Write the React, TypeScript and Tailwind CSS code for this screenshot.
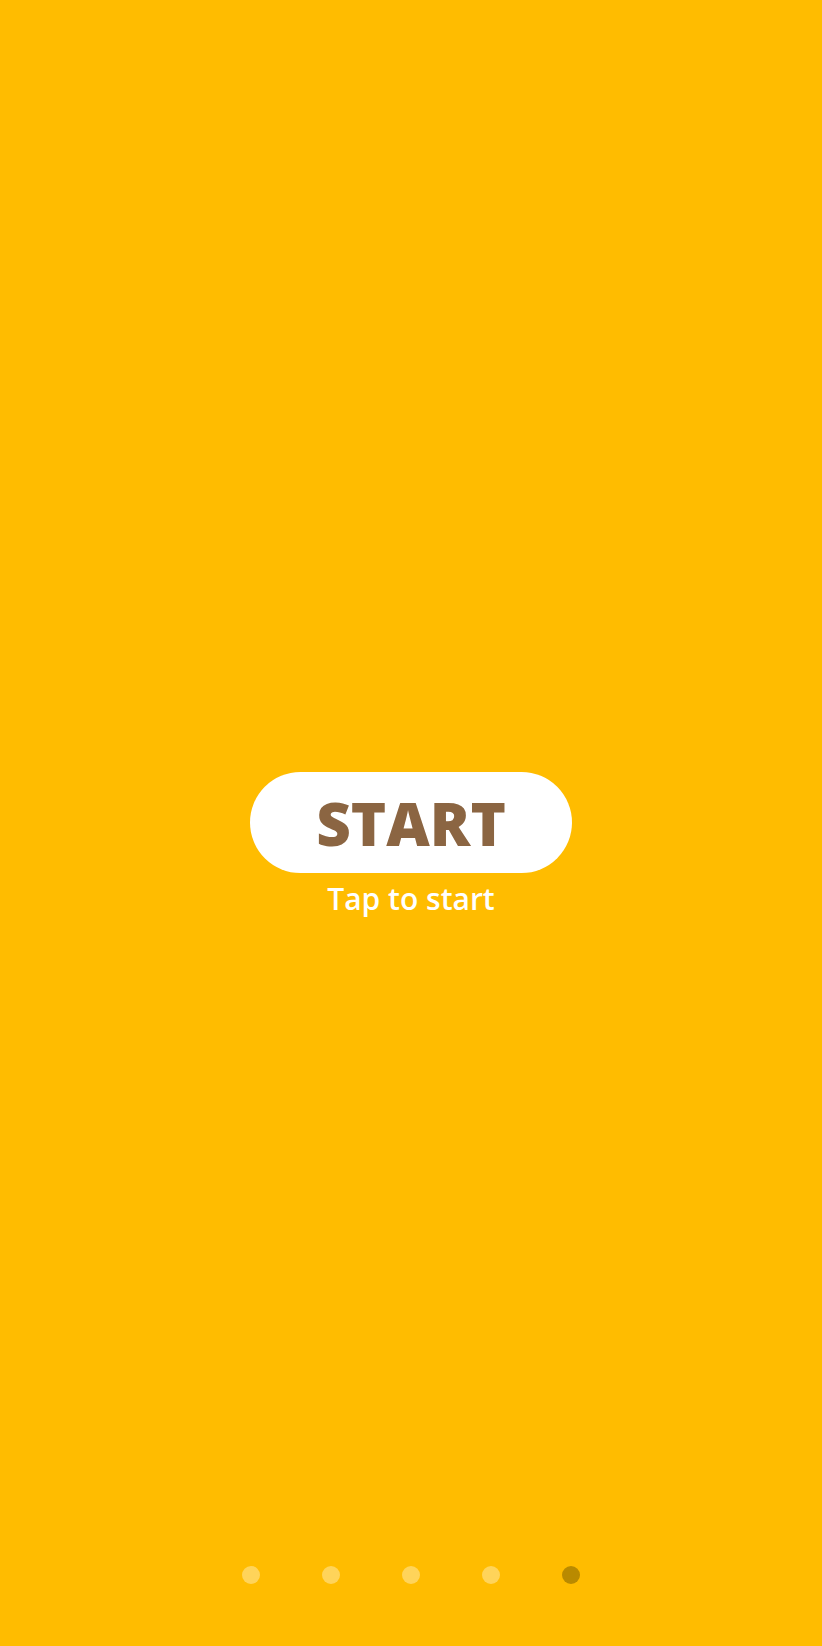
export default function App() {
  const dots = [0, 1, 2, 3, 4];
  const active = 4;

  return (
    <div
      className="h-[1646px] w-full bg-[#FFBC00] flex flex-col items-center"
      style={{ fontFamily: '"Open Sans", "Liberation Sans", sans-serif' }}
    >
      <button className="mt-[772px] w-[322px] h-[101px] rounded-full bg-white flex items-center justify-center">
        <span className="text-[60px] leading-none font-extrabold text-[#8B6542]">START</span>
      </button>
      <p className="mt-[5px] text-[30px] leading-[41px] font-semibold text-white">Tap to start</p>

      <div className="mt-auto mb-[62px] flex items-center gap-[62px]">
        {dots.map((i) => (
          <span
            key={i}
            className={
              i === active
                ? 'block w-[18px] h-[18px] rounded-full bg-[#B98A00]'
                : 'block w-[18px] h-[18px] rounded-full bg-[#FFD45A]'
            }
          />
        ))}
      </div>
    </div>
  );
}
